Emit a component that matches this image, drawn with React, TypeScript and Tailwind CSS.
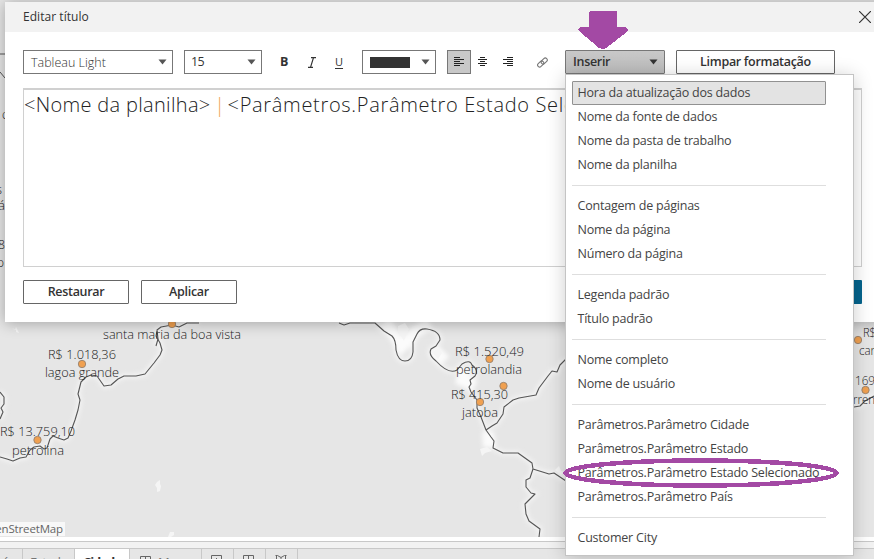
import React from 'react';

const groups = [
  ['Hora da atualização dos dados', 'Nome da fonte de dados', 'Nome da pasta de trabalho', 'Nome da planilha'],
  ['Contagem de páginas', 'Nome da página', 'Número da página'],
  ['Legenda padrão', 'Título padrão'],
  ['Nome completo', 'Nome de usuário'],
  ['Parâmetros.Parâmetro Cidade', 'Parâmetros.Parâmetro Estado', 'Parâmetros.Parâmetro Estado Selecionado', 'Parâmetros.Parâmetro País'],
  ['Customer City'],
];

const rivers = [
  'M156 346 L158 339 L157 330 L161 327 L172 325 L179 327 L187 323 L199 323',
  'M80 400 L78 394 L81 382 L86 377 L91 375 L97 376 L104 386 L111 385 L118 379 L124 376 L136 376 L145 374 L154 363 L160 355 L162 350 L160 343 L156 336 L157 331',
  'M80 400 L78 410 L75 420 L71 431 L68 438 L64 440 L58 438 L53 436 L50 439 L47 448 L44 449 L40 446 L34 447 L30 450 L26 457 L20 458 L13 461 L7 459 L0 457',
  'M0 392 L4 397 L4 404 L1 408 L3 412 L0 419',
  'M339 323 L344 325 L350 323 L375 323 L384 331 L392 336 Q396 340 396 350 Q398 361 405 361 Q412 361 413 352 L413 342 L417 334 Q420 328 427 329 Q440 331 440 340 L436 346 L431 349 Q428 355 436 361 Q449 375 457 370 L462 364 Q470 359 472 365 Q479 370 475 376 L470 380 L471 384 L469 387 L471 392 L477 400 L477 408 L481 417 L486 430 L491 437 L494 441 L493 448 L503 453 L518 453 L525 458 L532 463 L533 469 L549 474 L554 473 L566 481',
  'M486 430 L492 426 L497 423 L503 414 L504 407 L513 400 L519 398 L536 395 L539 388 L548 376 L552 371 L557 372 L560 365 L566 359',
  'M533 469 L530 478 L526 480 L526 487 L531 493 L535 494 L529 500 L525 504 L526 514 L529 521 L540 529 L539 537',
  'M854 407 L860 406 L865 401 L874 396',
];

const labels: [string, number, number, number][] = [
  ['santa maria da boa vista', 103, 339, 138],
  ['R$ 1.018,36', 48, 359, 68],
  ['lagoa grande', 45, 377, 74],
  ['R$ 13.759,10', 0, 436, 75],
  ['petrolina', 12, 455, 52],
  ['R$ 1.520,49', 455, 356, 69],
  ['petrolandia', 456, 374, 66],
  ['R$ 415,30', 451, 399, 57],
  ['jatoba', 462, 417, 36],
  ['R$', 863, 337, 13],
  ['car', 859, 355, 16],
  ['169', 855, 385, 20],
  ['rren', 853, 404, 22],
  ['o', 2, 119, 7],
  ['s', -4, 194, 6],
  ['á', -2, 210, 7],
  ['8', -2, 249, 7],
  ['o', -3, 267, 7],
];

const dots = [[172, 324], [82, 364], [37.5, 440], [489.5, 359], [503.5, 386], [480, 402], [858, 340], [865.5, 390]];

function MapCanvas() {
  return (
    <svg className="absolute left-0 top-0" width="874" height="537" viewBox="0 0 874 537">
      <defs>
        <filter id="soft" x="-10%" y="-10%" width="120%" height="120%">
          <feGaussianBlur stdDeviation="2" />
        </filter>
      </defs>
      <rect width="874" height="537" fill="#e6e6e6" />
      <g fill="none" stroke="#f3f3f3" strokeWidth="5" filter="url(#soft)">
        {rivers.map((d) => <path key={d} d={d} />)}
        <path d="M385 322 L402 346 L415 332 L430 324 M434 350 L445 361 M465 369 L462 380 L475 386 M488 432 L489 447" stroke="#fbfbfb" strokeWidth="12" />
      </g>
      <g fill="#f5f5f5">
        <path d="M12 328l3 2 1-3 2 4 1 2-3-1v-2zM157 482l3-2v4l1 2-1 5-3 1v-4l-2-3zM170 532h4v3l-3 2h-3zM398 326l7-3 4 6-5 12-6-9zM432 352l8-4 2 5-4 6zM480 449l7-2 5 4-7 2-3 3zM555 470l4-4 2 5 4 1-4 3z" />
      </g>
      <g fill="none" stroke="#555" strokeWidth="1.1" strokeLinejoin="round">
        {rivers.map((d) => <path key={d} d={d} />)}
        <path d="M0 54h5M0 72l5 6" strokeWidth="1" />
      </g>
      <g fill="#f0a050" stroke="#8c7b6c" strokeWidth="0.8">
        {dots.map(([x, y]) => <circle key={x} cx={x} cy={y} r="3.7" />)}
      </g>
      <g fill="#222" fontSize="12.5" fontFamily="'Open Sans', sans-serif" fontWeight="300">
        {labels.map(([text, x, y, w]) => (
          <text key={`${text}${y}`} x={x} y={y} textLength={w} lengthAdjust="spacingAndGlyphs">{text}</text>
        ))}
      </g>
    </svg>
  );
}

function Caret({ className = '' }: { className?: string }) {
  return (
    <svg className={className} width="9" height="6" viewBox="0 0 9 6">
      <path d="M.5.5h8L4.500 5.500z" fill="currentColor" />
    </svg>
  );
}

function AlignIcon({ kind }: { kind: 'left' | 'center' | 'right' }) {
  const widths = kind === 'center' ? [5, 9, 5, 9, 5] : [6, 10, 6, 10, 6];
  return (
    <svg width="10" height="10" viewBox="0 0 10 10" shapeRendering="crispEdges">
      {widths.map((w, i) => (
        <rect key={i} x={kind === 'left' ? 0 : kind === 'right' ? 10 - w : (9 - w) / 2} y={i * 2} width={w} height="1" fill="#222" />
      ))}
    </svg>
  );
}

function GridIcon({ plus = false }: { plus?: boolean }) {
  return (
    <svg width="12" height="12" viewBox="0 0 12 12" fill="none" stroke="#666">
      <path d="M.5.5h10v10H.5z" />
      <path d={plus ? 'M5.500 3v6M3 6h5' : 'M5.500.5v10M.5 5.500h10'} />
    </svg>
  );
}

function SheetTabs() {
  return (
    <div className="absolute inset-x-0 top-[537px] flex h-[22px] flex-col overflow-hidden bg-white pt-1">
      <div className="h-2 shrink-0 border-y border-[#c8c8c8] bg-[#f2f2f2]" />
      <div className="flex h-[24px] shrink-0 bg-[#e6e6e6] text-[13px] leading-[26px] text-[#777]">
        <div className="w-[23px] overflow-hidden border-r border-[#c8c8c8] pl-1">ís</div>
        <div className="w-[52px] border-r border-[#c8c8c8] pl-[7px] tracking-[-0.6px]">Estado</div>
        <div className="w-[55px] overflow-hidden border-r border-[#c8c8c8] bg-white pl-2 font-bold tracking-[-1.1px] text-[#333]">Cidade</div>
        <div className="flex w-[72px] gap-1.5 overflow-hidden border-r border-[#c8c8c8] pl-2.5">
          <span className="pt-[7px]"><GridIcon /></span>Mapa
        </div>
        <div className="w-8 border-r border-[#c8c8c8] pl-[9px] pt-1.5"><GridIcon plus /></div>
        <div className="w-8 border-r border-[#c8c8c8] pl-[9px] pt-1.5"><GridIcon /></div>
        <div className="w-8 border-r border-[#c8c8c8] pl-[9px] pt-1.5">
          <svg width="12" height="12" viewBox="0 0 12 12" fill="none" stroke="#666"><path d="M.5.5h2l3.500 2 3.500-2h2M1.500.5v9h9v-9M6 2.500v6" /></svg>
        </div>
      </div>
    </div>
  );
}

function InsertMenu() {
  return (
    <div className="absolute left-[565px] top-[74px] h-[482px] w-[289px] border border-[#c4c4c4] bg-white pl-1.5 pt-1.5 text-[12.5px] tracking-[-0.21px] text-[#444] shadow-[0_2px_18px_rgba(0,0,0,0.2)]">
      {groups.map((group, g) => (
        <div key={g} className={g ? 'mt-2 w-[254px] border-t border-[#dedede] pt-2' : 'w-[254px]'}>
          {group.map((item, i) => (
            <div
              key={item}
              className={
                g === 0 && i === 0
                  ? 'flex h-6 items-center whitespace-nowrap rounded-[1px] border border-[#919191] bg-[#e3e3e3] pl-[4.5px]'
                  : 'flex h-6 items-center whitespace-nowrap pl-[5.5px]'
              }
            >
              {item}
            </div>
          ))}
        </div>
      ))}
    </div>
  );
}

export default function App() {
  return (
    <div className="relative h-[559px] w-[874px] overflow-hidden bg-[#e6e6e6] font-['Open_Sans',sans-serif]">
      <MapCanvas />
      <div className="absolute left-0 top-[522px] flex h-[14px] w-[65px] items-center justify-end bg-[#f8f8f8] pr-[2px] text-[11.5px] tracking-[-0.15px] text-[#666]">
        <span>enStreetMap</span>
      </div>
      <SheetTabs />
      <div className="absolute left-[5px] top-[2px] flex h-[320px] w-[900px] flex-col bg-white shadow-[0_1px_14px_rgba(0,0,0,0.3)]">
        <header className="flex h-[30px] items-center justify-between bg-[#f2f2f2] pl-[18px] pr-[34px] text-[12px] text-[#333]">
          <span className="tracking-[0.05px]">Editar título</span>
          <svg width="12" height="12" viewBox="0 0 12 12" stroke="#333" strokeWidth="1.2"><path d="M0 0l12 12M12 0L0 12" /></svg>
        </header>
        <div className="mt-[18px] flex h-6 items-center pl-[18px] text-[12.5px] text-[#333]">
          <div className="flex h-6 w-[150px] items-center justify-between border border-[#777] pl-[7px] pr-[5px] pt-[3px] font-light">
            Tableau Light<Caret className="mb-[3px] text-[#555]" />
          </div>
          <div className="ml-[11px] flex h-6 w-[78px] items-center justify-between border border-[#777] pl-1.5 pr-[5px]">
            <span className="tracking-[-0.6px]">15</span><Caret className="text-[#555]" />
          </div>
          <b className="ml-[18px] w-[28px]">B</b>
          <svg className="w-[27px]" width="27" height="11" viewBox="0 0 27 11" fill="none" stroke="#333" strokeWidth="1.2"><path d="M3 .6h5M0 10.400h5M5.500.6L2.500 10.400" /></svg>
          <span className="w-[27px] text-[11px] underline underline-offset-2">U</span>
          <div className="flex h-6 w-[74px] items-center justify-between border border-[#777] pl-[7px] pr-[5px]">
            <span className="h-[11px] w-10 bg-[#333]" /><Caret className="text-[#555]" />
          </div>
          <div className="ml-[11px] flex h-6 w-6 items-center justify-center border border-[#777] bg-[#c8c8c8]"><AlignIcon kind="left" /></div>
          <div className="ml-[7px]"><AlignIcon kind="center" /></div>
          <div className="ml-[15px]"><AlignIcon kind="right" /></div>
          <svg className="ml-6" width="11" height="11" viewBox="0 0 11 11" fill="none" stroke="#777" strokeWidth="1.1">
            <rect x="-3.500" y="-2" width="7" height="4" rx="2" transform="translate(3.700 7) rotate(-45)" />
            <rect x="-3.500" y="-2" width="7" height="4" rx="2" transform="translate(7.200 4) rotate(-45)" />
          </svg>
          <div className="ml-[17px] flex h-6 w-[100px] items-center justify-between rounded-[1px] border border-[#777] bg-gradient-to-b from-[#c8c8c8] to-[#bcbcbc] pl-[7px] pr-1.5 font-semibold tracking-[-0.3px]">
            Inserir<Caret />
          </div>
          <div className="ml-[11px] flex h-6 w-[159px] items-center justify-center rounded-[1px] border border-[#666] text-[12.5px] font-semibold tracking-[-0.3px]">Limpar formatação</div>
        </div>
        <div className="ml-[18px] mt-[14px] h-[179px] w-[839px] border border-t-2 border-[#d0d0d0] text-[20px] font-light leading-[30px] text-[#222]">
          <span className="whitespace-nowrap">
            <span className="tracking-[0.32px]">{'<Nome da planilha>'}</span>
            <span className="tracking-[-1.4px]"> <span className="text-[#f0a050]">|</span> </span>
            <span className="tracking-[0.68px]">{'<Parâmetros.Parâmetro Estado Selecionado>'}</span>
          </span>
        </div>
        <div className="ml-[18px] mt-[13px] flex h-6 w-[839px] text-[12.5px] font-semibold tracking-[-0.3px] text-[#333]">
          <div className="flex w-[106px] items-center justify-center rounded-[1px] border border-[#666]">Restaurar</div>
          <div className="ml-3 flex w-24 items-center justify-center rounded-[1px] border border-[#666]">Aplicar</div>
          <div className="ml-auto w-20 rounded-[1px] bg-[#05648d]" />
        </div>
      </div>
      <InsertMenu />
      <svg className="absolute left-0 top-0" width="874" height="559" viewBox="0 0 874 559" shapeRendering="crispEdges">
        <path d="M590 11h26l1 1v15h9l2 3-1 2-21 16-3 1-4-1-20-17-1-2 2-2h9V12z" fill="#a349a4" />
        <ellipse cx="701" cy="473" rx="135.500" ry="12.500" fill="none" stroke="#a349a4" strokeWidth="4.500" />
      </svg>
    </div>
  );
}
